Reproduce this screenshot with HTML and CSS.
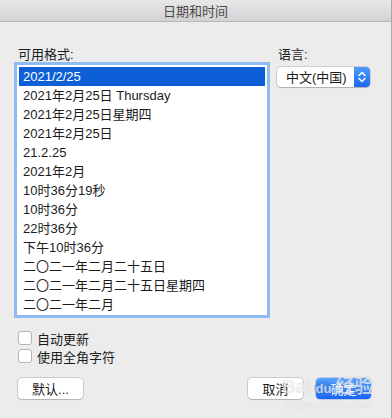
FILE: index.html
```html
<!DOCTYPE html>
<html lang="zh-CN">

<head>
  <meta charset="UTF-8" />
  <title>日期和时间</title>
  <link rel="stylesheet" href="styles.css">
</head>

<body>
  <div class="window">
    <div class="titlebar">日期和时间</div>

    <div class="content">
      <div class="columns">
        <div class="formats">
          <div class="label">可用格式:</div>
          <div class="list-box">
            <ul class="format-list">
              <li class="selected">2021/2/25</li>
              <li>2021年2月25日 Thursday</li>
              <li>2021年2月25日星期四</li>
              <li>2021年2月25日</li>
              <li>21.2.25</li>
              <li>2021年2月</li>
              <li>10时36分19秒</li>
              <li>10时36分</li>
              <li>22时36分</li>
              <li>下午10时36分</li>
              <li>二〇二一年二月二十五日</li>
              <li>二〇二一年二月二十五日星期四</li>
              <li>二〇二一年二月</li>
            </ul>
          </div>
        </div>

        <div class="language">
          <div class="label">语言:</div>
          <div class="popup">
            <span class="popup-text">中文(中国)</span>
            <span class="popup-arrows">
              <svg width="16" height="20" viewBox="0 0 16 20">
                <path d="M5 8.5 L8 5.5 L11 8.5" fill="none" stroke="#fff" stroke-width="1.5" stroke-linecap="round" stroke-linejoin="round" />
                <path d="M5 11.5 L8 14.5 L11 11.5" fill="none" stroke="#fff" stroke-width="1.5" stroke-linecap="round" stroke-linejoin="round" />
              </svg>
            </span>
          </div>
        </div>
      </div>

      <div class="options">
        <label class="check"><span class="box"></span>自动更新</label>
        <label class="check"><span class="box"></span>使用全角字符</label>
      </div>

      <div class="buttons">
        <button class="btn wide">默认...</button>
        <div class="spacer"></div>
        <button class="btn">取消</button>
        <button class="btn primary">确定</button>
      </div>
    </div>

    <div class="watermark">
      <span class="wm-brand">Bai<span class="wm-du">du</span>经验</span>
      <span class="wm-url">jingyan.baidu.com</span>
    </div>
  </div>
</body>

</html>
```

FILE: styles.css
```css
:root {
  --window-bg: #ececec;
  --text-main: #1b1b1b;
  --select-blue: #0d5fd8;
  --focus-ring: #8dbcf5;
  --ui-font: "Liberation Sans", "Noto Sans CJK SC", sans-serif;
}

* {
  box-sizing: border-box;
}

body {
  margin: 0;
  background: var(--window-bg);
  font-family: var(--ui-font);
  font-size: 13px;
  color: var(--text-main);
}

.window {
  position: relative;
  width: 392px;
  height: 418px;
  border-right: 1px solid #a8a8a8;
  background: var(--window-bg);
  overflow: hidden;
}

.titlebar {
  height: 22px;
  line-height: 23px;
  text-align: center;
  color: #4a4a4a;
  background: linear-gradient(#e9e7e9, #d3d1d3);
  border-bottom: 1px solid #b8b8b8;
}

.content {
  padding: 25px 20px 0 17px;
}

.columns {
  display: flex;
  gap: 10px;
}

.label {
  height: 16px;
  line-height: 16px;
  padding-left: 1px;
}

/* format list */
.list-box {
  margin-top: 2px;
  width: 250px;
  height: 250px;
  padding: 2px;
  background: #fff;
  box-shadow: 0 0 0 3px var(--focus-ring);
}

.format-list {
  list-style: none;
  margin: 0;
  padding: 0;
}

.format-list li {
  height: 19px;
  line-height: 20px;
  padding-left: 4px;
  white-space: nowrap;
}

.format-list li.selected {
  background: var(--select-blue);
  color: #fff;
}

/* language popup */
.popup {
  margin-top: 4px;
  width: 93px;
  height: 20px;
  display: flex;
  background: #fff;
  border-radius: 4px;
  box-shadow: 0 0 0 0.5px rgba(0, 0, 0, 0.25), 0 1px 1px rgba(0, 0, 0, 0.15);
  overflow: hidden;
}

.popup-text {
  flex: 1;
  line-height: 21px;
  padding-left: 9px;
}

.popup-arrows {
  width: 16px;
  display: flex;
  background: linear-gradient(#4d9bfa, #1a69f2);
}

/* checkboxes */
.options {
  margin-top: 16px;
  display: flex;
  flex-direction: column;
  gap: 4px;
}

.check {
  display: flex;
  align-items: center;
  gap: 5px;
  height: 14px;
  padding-left: 1px;
}

.check .box {
  width: 14px;
  height: 14px;
  background: #fff;
  border: 1px solid #b4b4b4;
  border-radius: 3px;
}

/* buttons */
.buttons {
  margin-top: 15px;
  display: flex;
  gap: 13px;
  padding-left: 1px;
}

.spacer {
  flex: 1;
}

.btn {
  width: 55px;
  height: 21px;
  padding: 0;
  font-family: var(--ui-font);
  font-size: 13px;
  color: var(--text-main);
  background: #fff;
  border: none;
  border-radius: 4px;
  box-shadow: 0 0 0 0.5px rgba(0, 0, 0, 0.28), 0 1px 1px rgba(0, 0, 0, 0.12);
}

.btn.wide {
  width: 65px;
}

.btn.primary {
  color: #fff;
  background: linear-gradient(#5aa4fb, #1665f8);
  box-shadow: 0 0 0 0.5px rgba(0, 40, 160, 0.35);
}

/* watermark */
.watermark {
  position: absolute;
  left: 282px;
  top: 376px;
  display: flex;
  flex-direction: column;
  align-items: center;
  pointer-events: none;
}

.wm-brand {
  font-size: 19px;
  font-weight: bold;
  line-height: 22px;
  color: rgba(255, 255, 255, 0.7);
  text-shadow: 0 0 1px rgba(0, 0, 0, 0.2);
}

.wm-du {
  display: inline-block;
  margin: 0 2px;
  padding: 0 2px;
  font-size: 13px;
  line-height: 15px;
  border-radius: 8px;
  background: rgba(60, 120, 220, 0.3);
}

.wm-url {
  font-size: 11px;
  line-height: 12px;
  color: rgba(255, 255, 255, 0.8);
  text-shadow: 0 0 1px rgba(0, 0, 0, 0.2);
}
```
